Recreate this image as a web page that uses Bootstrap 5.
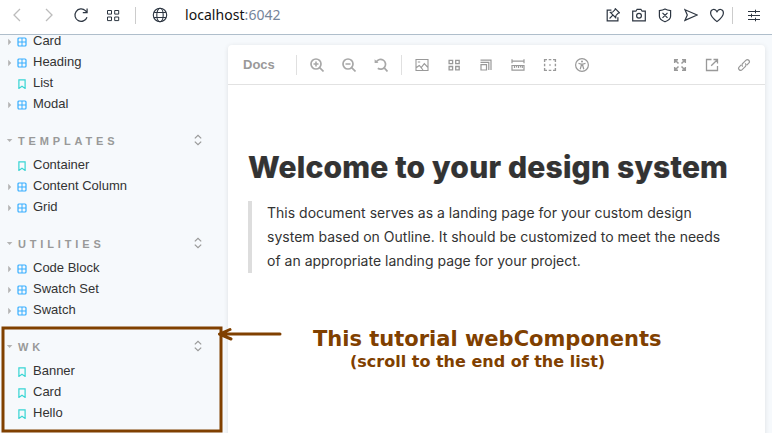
<!DOCTYPE html>
<html lang="en">
<head>
<meta charset="utf-8">
<title>Design system docs</title>
<link href="https://cdn.jsdelivr.net/npm/bootstrap@5.3.0/dist/css/bootstrap.min.css" rel="stylesheet">
<style>
body{width:772px;height:433px;background:#f6f9fc;font-family:"Liberation Sans",Arial,sans-serif;color:#333}
svg{display:block;fill:none;stroke:currentColor;flex:none}
.browser-bar{height:35px;background:#fff;border-bottom:1px solid #afbecb;color:#2c3541;padding:0 5px 4px 1px}
.slot{width:32px;height:30px;display:flex;align-items:center;justify-content:center;flex:none}
.slot-sm{width:26px}
.faded{color:#bcbcbc}
.address{font:14px/20px "Noto Sans",sans-serif;color:#111;margin-left:9px;letter-spacing:.05px}
.address span{color:#75849a}
.vline{width:1px;height:17px;background:#ccc;flex:none}
.bar-split{margin:0 8px 0 6px}
.side{width:228px}
.tree{margin-top:-5px}
.tree-item{height:21px;font-size:13px;line-height:21px;padding-left:6px}
.tree-item svg{margin-top:2px}
.twisty{width:12px;height:8px;flex:none;margin-top:2px;color:#b3b3b3}
.tree-item .kind{width:10px;height:10px;margin-right:6px;margin-left:-1px;color:#37aeff}
.tree-item .story{color:#37d5d3}
.tree-head{height:22px;margin:16px 0 2px;padding:0 25px 0 6px;font-size:11px;font-weight:700;letter-spacing:3.85px;color:#999}
.tree-head .title{margin-left:5px}
.tree-head .updown{margin-bottom:2px}
.panel{width:537px;height:400px;margin-top:10px;background:#fff;border-radius:4px 4px 0 0;box-shadow:0 1px 5px rgba(0,0,0,.1)}
.tools{height:40px;border-bottom:1px solid #e2e2e2;color:#999;padding:0 5px 0 15px}
.tools .docs-tab{font-size:13px;font-weight:700;width:53px}
.tools .vline{height:20px;background:#e0e0e0}
.tools .zooms{color:#a8a8a8}
.doc-page{padding:62px 20px 0}
.doc-page h1{font:800 30px/40px Inter,sans-serif;letter-spacing:.2px;margin:0 -20px 14px 0;white-space:nowrap;-webkit-text-stroke:.2px #333}
.doc-page blockquote{font:14px/24px Inter,sans-serif;letter-spacing:.01px;border-left:4px solid #ddd;padding-left:15px;margin:0;white-space:nowrap}
.note{color:#804000;font-family:"DejaVu Sans",sans-serif;font-weight:700;white-space:nowrap}
.note-title{font-size:21px;line-height:25px;margin:54px 0 0 65px}
.note-sub{font-size:16px;line-height:20px;margin-left:102px}
.marker{z-index:5;color:#804000}
</style>
<script src="https://cdn.jsdelivr.net/npm/bootstrap@5.3.0/dist/js/bootstrap.bundle.min.js"></script>
</head>
<body class="overflow-hidden position-relative">
<svg width="0" height="0" class="position-absolute">
<defs>
<symbol id="grid" viewBox="0 0 10 10"><rect x="1" y="1" width="8" height="8" rx="1" stroke-width="1.2"/><path d="M5 1v8M1 5h8"/></symbol>
<symbol id="bookmark" viewBox="0 0 10 10"><path d="M1.9.8h6.2v8.6L5 7.2 1.9 9.4z" stroke-width="1.2"/></symbol>
<symbol id="closed" viewBox="0 0 12 8"><path d="M2.2.8v6.4L5.2 4z" fill="currentColor" stroke="none"/></symbol>
<symbol id="updown" viewBox="0 0 10 12"><path d="M1.8 4.4 5 1.3l3.2 3.1M1.8 7.6 5 10.7l3.2-3.1" stroke-width="1.2"/></symbol>
</defs>
</svg>

<header class="browser-bar d-flex align-items-center">
<span class="slot faded"><svg width="14" height="16"><path d="m10 2-6 6 6 6" stroke-width="1.3"/></svg></span>
<span class="slot faded"><svg width="14" height="16"><path d="m4 2 6 6-6 6" stroke-width="1.3"/></svg></span>
<span class="slot"><svg width="16" height="16"><path d="M14 10.2A6.2 6.2 0 1 1 12.400 3.600L14 5.400M14.100 1.500v4.200H9.800" stroke-width="1.200"/></svg></span>
<span class="slot"><svg width="14" height="13"><path d="M1.500 1.500h4v3.600h-4zM8.700 1.500h4v3.600h-4zM1.500 8h4v3.600h-4zM8.700 8h4v3.600h-4z" stroke-width="1"/></svg></span>
<span class="vline bar-split"></span>
<span class="slot"><svg width="16" height="16"><g stroke-width="1.100"><circle cx="8" cy="8" r="6.700"/><ellipse cx="8" cy="8" rx="3.200" ry="6.700"/><path d="M2.100 5.500h11.800M2.100 10.500h11.800"/></g></svg></span>
<span class="address">localhost<span>:6042</span></span>
<div class="d-flex align-items-center ms-auto">
<span class="slot slot-sm ps-1"><svg width="14" height="14"><path d="M5.400 2.100H1.200v10.700h10.700V9.200" stroke-width="1.200"/><path d="m9.300.700 4.100 4.100-1.300.500-2.100 2.100-.300 2.300L4.400 4.400l2.300-.300 2.100-2.100zM6.800 7.200 3.600 10.500" stroke-width="1.100"/></svg></span>
<span class="slot slot-sm ps-1"><svg width="14" height="14"><path d="M.7 3.200h3.200l1.200-1.900h3.800l1.200 1.900h3.200v9.600H.7z" stroke-width="1.200"/><circle cx="7" cy="7.700" r="2.400" stroke-width="1.200"/></svg></span>
<span class="slot slot-sm ps-1"><svg width="14" height="15"><path d="M7 1.100c1.600 1 3.300 1.400 5.600 1.500v5.600c0 2.700-2.700 4.400-5.600 5.600-2.900-1.200-5.600-2.900-5.600-5.600V2.600C3.700 2.500 5.400 2.100 7 1.100zM4.500 4.900l5 5M9.500 4.900l-5 5" stroke-width="1.200"/></svg></span>
<span class="slot slot-sm ps-1"><svg width="14" height="14"><path d="M1 1.700 13.200 7 1 12.300 3.300 7z" stroke-width="1.200"/></svg></span>
<span class="slot slot-sm ps-1"><svg width="16" height="15"><path d="M8 13.600C4 10.500 1.600 8.200 1.600 5c0-3.900 4.600-4.900 6.400-1.300C9.800.1 14.400 1.100 14.400 5c0 3.200-2.400 5.500-6.400 8.600z" stroke-width="1.200"/></svg></span>
<span class="vline ms-1 me-1"></span><span class="slot slot-sm ms-1"><svg width="14" height="13"><path d="M1 2.500h12M1 6.500h12M1 10.500h12M8.500.7v3.600M4.500 4.700v3.600M8.500 8.700v3.600"/></svg></span>
</div>
</header>

<div class="d-flex">
<aside class="side overflow-hidden">
<div class="tree">
<div class="tree-item d-flex align-items-center"><svg class="twisty"><use href="#closed"/></svg><svg class="kind"><use href="#grid"/></svg><span>Card</span></div>
<div class="tree-item d-flex align-items-center"><svg class="twisty"><use href="#closed"/></svg><svg class="kind"><use href="#grid"/></svg><span>Heading</span></div>
<div class="tree-item d-flex align-items-center"><span class="twisty"></span><svg class="kind story"><use href="#bookmark"/></svg><span>List</span></div>
<div class="tree-item d-flex align-items-center"><svg class="twisty"><use href="#closed"/></svg><svg class="kind"><use href="#grid"/></svg><span>Modal</span></div>

<div class="tree-head d-flex align-items-center"><svg width="7" height="6"><path d="M.8 1h5.600L3.600 4z" fill="#b3b3b3" stroke="none"/></svg><span class="title">TEMPLATES</span><svg class="updown ms-auto" width="10" height="12"><use href="#updown"/></svg></div>
<div class="tree-item d-flex align-items-center"><span class="twisty"></span><svg class="kind story"><use href="#bookmark"/></svg><span>Container</span></div>
<div class="tree-item d-flex align-items-center"><svg class="twisty"><use href="#closed"/></svg><svg class="kind"><use href="#grid"/></svg><span>Content Column</span></div>
<div class="tree-item d-flex align-items-center"><svg class="twisty"><use href="#closed"/></svg><svg class="kind"><use href="#grid"/></svg><span>Grid</span></div>

<div class="tree-head d-flex align-items-center"><svg width="7" height="6"><path d="M.8 1h5.600L3.600 4z" fill="#b3b3b3" stroke="none"/></svg><span class="title">UTILITIES</span><svg class="updown ms-auto" width="10" height="12"><use href="#updown"/></svg></div>
<div class="tree-item d-flex align-items-center"><svg class="twisty"><use href="#closed"/></svg><svg class="kind"><use href="#grid"/></svg><span>Code Block</span></div>
<div class="tree-item d-flex align-items-center"><svg class="twisty"><use href="#closed"/></svg><svg class="kind"><use href="#grid"/></svg><span>Swatch Set</span></div>
<div class="tree-item d-flex align-items-center"><svg class="twisty"><use href="#closed"/></svg><svg class="kind"><use href="#grid"/></svg><span>Swatch</span></div>

<div class="tree-head d-flex align-items-center"><svg width="7" height="6"><path d="M.8 1h5.600L3.600 4z" fill="#b3b3b3" stroke="none"/></svg><span class="title">WK</span><svg class="updown ms-auto" width="10" height="12"><use href="#updown"/></svg></div>
<div class="tree-item d-flex align-items-center"><span class="twisty"></span><svg class="kind story"><use href="#bookmark"/></svg><span>Banner</span></div>
<div class="tree-item d-flex align-items-center"><span class="twisty"></span><svg class="kind story"><use href="#bookmark"/></svg><span>Card</span></div>
<div class="tree-item d-flex align-items-center"><span class="twisty"></span><svg class="kind story"><use href="#bookmark"/></svg><span>Hello</span></div>
</div>
</aside>

<main class="panel">
<div class="tools d-flex align-items-center">
<span class="docs-tab">Docs</span><span class="vline me-1"></span>
<span class="slot zooms"><svg width="14" height="14"><circle cx="6" cy="6" r="5" stroke-width="1.700"/><path d="m9.600 9.600 3.900 3.900M3.500 6h5M6 3.500v5" stroke-width="1.600"/></svg></span>
<span class="slot zooms"><svg width="14" height="14"><circle cx="6" cy="6" r="5" stroke-width="1.700"/><path d="m9.600 9.600 3.900 3.900M3.500 6h5" stroke-width="1.600"/></svg></span>
<span class="slot zooms"><svg width="14" height="14"><path d="M2.400 3.800A4.900 4.900 0 1 1 3.800 10.300M10 9.700l3.500 3.800" stroke-width="1.700"/><path d="M.6 1.200v3.900h3.900z" fill="currentColor" stroke="none"/></svg></span>
<span class="vline ms-1 me-1"></span>
<span class="slot"><svg width="14" height="14"><path d="M1 1.500h12v11H1zM1.500 9.500l2.700-2 2 2.200 3.100-4L13 9.500M4.500 7.700 8 12M2.800 4h2.400" stroke-width="1.100"/></svg></span>
<span class="slot"><svg width="14" height="14"><path d="M2.100 2.300h3.500v3.400H2.100zM8.700 2.300h3.500v3.400H8.700zM2.100 8.500h3.500v3.400H2.100zM8.700 8.500h3.500v3.400H8.700z" stroke-width="1.300"/></svg></span>
<span class="slot"><svg width="14" height="14"><path d="M2 6.600h5.500v5.400H2zM1.500 4.400h8.300V12M1.500 2.100H12V12" stroke-width="1.200"/></svg></span>
<span class="slot"><svg width="14" height="14"><path d="M1 7.500h12v4.700H1zM1 1.200v4M13 1.200v4M1 3.200h12M3.500 8v2M5.500 8v1.500M7.500 8v2M9.500 8v1.500M11.300 8v2" stroke-width="1.200"/></svg></span>
<span class="slot"><svg width="14" height="14"><path d="M1.600 4V1.600H4M5.700 1.600h2.600M10 1.600h2.400V4M12.400 5.700v2.600M12.400 10v2.400H10M8.300 12.400H5.700M4 12.400H1.600V10M1.600 8.300V5.700M6.300 7h1.400" stroke-width="1.400"/></svg></span>
<span class="slot"><svg width="14" height="14"><circle cx="7" cy="7" r="6.400" stroke-width="1.200"/><circle cx="7" cy="3.400" r="1" fill="currentColor" stroke="none"/><path d="M3.500 5.400 6 6h2l2.500-.6M6.200 6v2l-1 3.200M7.800 6v2l1 3.200M6.200 7.500h1.600" stroke-width="1.200"/></svg></span>
<div class="d-flex ms-auto">
<span class="slot"><svg width="14" height="14"><path d="M1.700 5V1.700H5M9 1.700h3.300V5M12.300 9v3.300H9M5 12.300H1.700V9M1.700 1.700l3.800 3.800M12.300 1.700 8.500 5.500M12.300 12.300 8.500 8.500M1.700 12.300l3.800-3.800" stroke-width="1.500"/></svg></span>
<span class="slot"><svg width="14" height="14"><path d="M6.500 1.500h-5v11h11V8M8.500 1.500h4v4M12.300 1.700 6.200 7.800" stroke-width="1.300"/></svg></span>
<span class="slot"><svg width="14" height="14"><path d="M5.800 8.600c-1-1-1-2.400 0-3.300l3-3c2-2 4.900.8 2.900 2.900l-1.900 1.900M8.200 5.400c1 1 1 2.400 0 3.300l-3 3c-2 2-4.900-.8-2.900-2.900l1.900-1.900" stroke-width="1.200"/></svg></span>
</div>
</div>
<article class="doc-page">
<h1>Welcome to your design system</h1>
<blockquote>This document serves as a landing page for your custom design<br>system based on Outline. It should be customized to meet the needs<br>of an appropriate landing page for your project.</blockquote>
<div class="note note-title">This tutorial webComponents</div>
<div class="note note-sub">(scroll to the end of the list)</div>
</article>
</main>
</div>

<svg class="marker position-absolute top-0 start-0" width="300" height="433"><rect x="3" y="328" width="218" height="103" stroke-width="3"/><path d="M280 334H220M230 329.500 219.500 334.200 231 339" stroke-width="3" stroke-linecap="round" stroke-linejoin="round"/></svg>
</body>
</html>
